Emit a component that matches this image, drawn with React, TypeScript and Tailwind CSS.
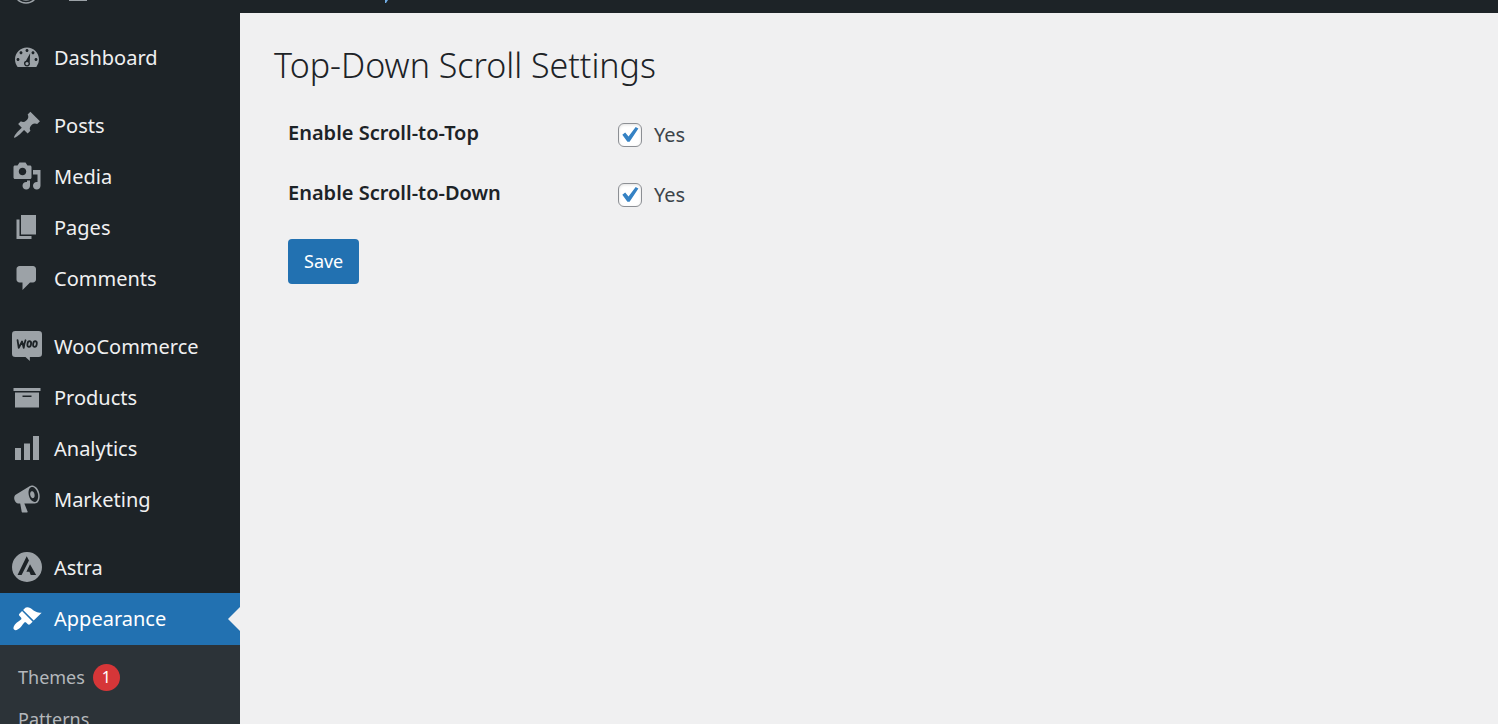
import { useState, type ReactNode } from 'react';

type Item = { label: string; icon: ReactNode; active?: boolean };

function Dashicon({ children }: { children: ReactNode }) {
  return (
    <svg viewBox="0 0 20 20" className="size-[30px] shrink-0" fill="currentColor" aria-hidden="true">
      {children}
    </svg>
  );
}

const icons = {
  dashboard: (
    <Dashicon>
      <path
        fillRule="evenodd"
        d="M3.76 16.700h12.480A7.950 7.950 0 0 0 18 11.700c0-4.420-3.580-8-8-8s-8 3.580-8 8c0 1.890.66 3.630 1.760 5zM10 4.700c.55 0 1 .45 1 1s-.45 1-1 1-1-.45-1-1 .45-1 1-1zM6 6.200c.55 0 1 .45 1 1s-.45 1-1 1-1-.45-1-1 .45-1 1-1zm8 0c.55 0 1 .45 1 1s-.45 1-1 1-1-.45-1-1 .45-1 1-1zM4 10.700c.55 0 1 .45 1 1s-.45 1-1 1-1-.45-1-1 .45-1 1-1zm12 0c.55 0 1 .45 1 1s-.45 1-1 1-1-.45-1-1 .45-1 1-1zM12.100 7.500l-.3 6.100c.1.200.2.500.2.800a2 2 0 1 1-2.700-1.900zM10 13.300a1.100 1.100 0 1 0 0 2.200 1.100 1.100 0 0 0 0-2.200z"
      />
    </Dashicon>
  ),
  posts: (
    <Dashicon>
      <path d="M10.440 3.020l1.820-1.820 6.360 6.350-1.830 1.820c-1.050-.68-2.480-.57-3.410.36l-.75.750c-.92.930-1.040 2.350-.35 3.410l-1.830 1.820-2.410-2.410-2.800 2.790c-.42.420-3.380 2.710-3.800 2.290s1.860-3.390 2.280-3.810l2.790-2.790L4.100 9.360l1.830-1.820c1.050.690 2.480.570 3.400-.36l.75-.75c.93-.92 1.050-2.350.36-3.410z" />
    </Dashicon>
  ),
  media: (
    <Dashicon>
      <path
        fillRule="evenodd"
        d="M13 11V4c0-.55-.45-1-1-1h-1.670L9 1H5L3.670 3H2c-.55 0-1 .45-1 1v7c0 .55.45 1 1 1h10c.55 0 1-.45 1-1zM7 4.500c1.380 0 2.500 1.120 2.500 2.500S8.380 9.500 7 9.500 4.500 8.380 4.500 7 5.620 4.500 7 4.500z"
      />
      <path d="M14 6h5v10.500c0 1.380-1.120 2.500-2.500 2.500S14 17.880 14 16.500s1.120-2.500 2.500-2.500c.17 0 .34.020.500.050V9h-3V6zM10 14.050V13h2v3.500c0 1.380-1.120 2.500-2.500 2.500S7 17.880 7 16.500 8.120 14 9.500 14c.17 0 .34.020.500.050z" />
    </Dashicon>
  ),
  pages: (
    <Dashicon>
      <path d="M6 15V2h10v13H6zm-1 1h8v2H3V5h2v11z" />
    </Dashicon>
  ),
  comments: (
    <Dashicon>
      <path d="M5 2h9c1.100 0 2 .9 2 2v7c0 1.100-.9 2-2 2h-2l-5 5v-5H5c-1.100 0-2-.9-2-2V4c0-1.100.9-2 2-2z" />
    </Dashicon>
  ),
  woo: (
    <Dashicon>
      <path d="M2.200 0h15.600A2.200 2.200 0 0 1 20 2.200v12.900a2.200 2.200 0 0 1-2.200 2.200h-5.900V20L9 17.300H2.200A2.200 2.200 0 0 1 0 15.100V2.200A2.200 2.200 0 0 1 2.200 0z" />
      <g fill="none" stroke="#1d2327" strokeWidth="1.200" strokeLinecap="round" strokeLinejoin="round">
        <path d="M3.700 6.100l.8 5.200L6.700 7l1.100 4.200c.2-1.900.6-3.500 1.200-5" />
        <ellipse cx="11.500" cy="8.700" rx="1.200" ry="1.900" transform="rotate(10 11.500 8.700)" />
        <ellipse cx="15.300" cy="8.700" rx="1.200" ry="1.900" transform="rotate(10 15.300 8.700)" />
      </g>
    </Dashicon>
  ),
  products: (
    <Dashicon>
      <path fillRule="evenodd" d="M19 4v2H1V4h18zM2 7h16v10H2V7zm11 3V9H7v1h6z" />
    </Dashicon>
  ),
  analytics: (
    <Dashicon>
      <path d="M18 18V2h-4v16h4zm-6 0V7H8v11h4zm-6 0v-8H2v8h4z" />
    </Dashicon>
  ),
  marketing: (
    <Dashicon>
      <path
        fillRule="evenodd"
        d="M18.150 5.940c.46 1.620.38 3.220-.02 4.480-.42 1.280-1.260 2.180-2.300 2.480-.16.060-.26.060-.4.060-.06.020-.12.020-.18.020-.06.020-.14.020-.22.020h-6.800l2.220 5.500c.02.140-.06.260-.14.340-.08.100-.24.160-.34.160H6.950c-.1 0-.26-.06-.34-.16-.08-.08-.16-.2-.14-.34l-1-5.500H4.250l-.02-.02c-.5.060-1.080-.18-1.540-.62s-.88-1.080-1.060-1.880c-.24-.8-.2-1.560-.02-2.200.18-.62.580-1.080 1.060-1.300l.02-.02 9-5.400c.1-.06.18-.1.240-.160.06-.04.14-.08.240-.120.160-.08.280-.120.500-.180 1.040-.3 2.240.100 3.220.980s1.840 2.240 2.260 3.860zm-2.580 5.980h-.02c.4-.1.740-.34 1.040-.7.580-.7.860-1.760.860-3.040 0-.64-.1-1.300-.28-1.980-.34-1.360-1.020-2.500-1.780-3.240s-1.680-1.100-2.460-.88c-.82.220-1.400.960-1.700 2-.32 1.040-.28 2.360.060 3.720.38 1.360 1 2.500 1.800 3.240.78.740 1.620 1.100 2.480.88zm-2.540-7.080c.22-.04.420-.02.620.040.38.160.760.480 1.020 1s.420 1.200.420 1.780c0 .3-.04.560-.120.800-.18.480-.44.840-.860.940-.34.100-.8-.060-1.140-.4s-.64-.86-.78-1.500c-.18-.62-.12-1.240.020-1.720s.48-.84.820-.940z"
      />
    </Dashicon>
  ),
  astra: (
    <Dashicon>
      <path
        fillRule="evenodd"
        d="M10 0a10 10 0 1 1 0 20 10 10 0 0 1 0-20zM9.800 2.900L3.700 15.300h2.700l4.900-9.600zM12 8.200l-2.400 5h2l.9 2.100h3.600z"
      />
    </Dashicon>
  ),
  appearance: (
    <Dashicon>
      <path d="M14.480 11.060L7.410 3.990l1.500-1.500c.5-.56 2.300-.47 3.510.320 1.210.800 1.430 1.280 2.910 2.100 1.180.640 2.450 1.260 4.450.850zm-.71.710L6.700 4.700 4.930 6.470c-.39.390-.39 1.020 0 1.410l1.060 1.060c.39.390.39 1.030 0 1.420-.6.600-1.430 1.110-2.210 1.690-.35.260-.7.530-1.010.840C1.430 14.230.4 16.080 1.400 17.070c.99 1 2.840-.030 4.180-1.360.31-.31.580-.66.850-1.020.57-.78 1.080-1.610 1.690-2.210.39-.39 1.020-.39 1.410 0l1.060 1.060c.39.390 1.020.390 1.410 0z" />
    </Dashicon>
  ),
};

const groups: Item[][] = [
  [{ label: 'Dashboard', icon: icons.dashboard }],
  [
    { label: 'Posts', icon: icons.posts },
    { label: 'Media', icon: icons.media },
    { label: 'Pages', icon: icons.pages },
    { label: 'Comments', icon: icons.comments },
  ],
  [
    { label: 'WooCommerce', icon: icons.woo },
    { label: 'Products', icon: icons.products },
    { label: 'Analytics', icon: icons.analytics },
    { label: 'Marketing', icon: icons.marketing },
  ],
  [
    { label: 'Astra', icon: icons.astra },
    { label: 'Appearance', icon: icons.appearance, active: true },
  ],
];

function MenuItem({ label, icon, active }: Item) {
  return (
    <li>
      <a
        href="#"
        aria-current={active ? 'page' : undefined}
        className={
          active
            ? 'relative flex h-[52px] items-center gap-3 bg-[#2271b1] pl-3 text-white'
            : 'flex h-[51px] items-center gap-3 pl-3 text-[#9ca2a7]'
        }
      >
        <span className={active ? '' : 'pb-0.5'}>{icon}</span>
        <span className={active ? 'text-white' : 'text-[#f0f0f1]'}>{label}</span>
        {active && (
          <span className="absolute top-1/2 right-0 -translate-y-1/2 border-y-12 border-r-12 border-y-transparent border-r-[#f0f0f1]" />
        )}
      </a>
    </li>
  );
}

function CheckRow({ id, label }: { id: string; label: string }) {
  const [checked, setChecked] = useState(true);
  return (
    <div className="flex h-[60px] items-start">
      <label htmlFor={id} className="w-[330px] leading-7 font-semibold text-[#1d2327]">
        {label}
      </label>
      <span className="flex items-center gap-3 pt-0.5">
        <span className="relative flex size-6">
          <input
            id={id}
            type="checkbox"
            checked={checked}
            onChange={(e) => setChecked(e.target.checked)}
            className="size-6 appearance-none rounded-md border border-[#8c8f94] bg-white shadow-[inset_0_1px_3px_rgba(0,0,0,0.12)]"
          />
          {checked && (
            <svg viewBox="0 0 24 24" className="pointer-events-none absolute inset-0 size-6" aria-hidden="true">
              <path d="M4.300 11.700l2.900-2.100 3.300 3.800 7.200-9.400 2.700 1.400-8.800 13.300H9.400z" fill="#3582c4" />
            </svg>
          )}
        </span>
        <label htmlFor={id} className="leading-7 text-[#3c434a]">
          Yes
        </label>
      </span>
    </div>
  );
}

export default function App() {
  return (
    <div className="flex h-screen flex-col overflow-hidden bg-[#f0f0f1] font-['Noto_Sans','Open_Sans',sans-serif] text-[20px]">
      <header className="h-[13px] shrink-0 bg-[#1d2327]">
        <svg className="h-[13px] w-[400px]" viewBox="0 0 400 13" aria-hidden="true">
          <circle cx="26" cy="-9" r="12" fill="none" stroke="#9ca2a7" strokeWidth="1.500" />
          <circle cx="26" cy="-9" r="9.800" fill="#9ca2a7" />
          <path d="M69 0h18v1H69z" fill="#9ca2a7" />
          <path d="M385 0h3l-2 3h-1z" fill="#72aee6" />
        </svg>
      </header>
      <div className="flex min-h-0 flex-1">
        <nav aria-label="Main menu" className="w-60 shrink-0 overflow-hidden bg-[#1d2327] pt-[19px]">
          <div className="flex flex-col gap-[17px]">
            {groups.map((group) => (
              <ul key={group[0].label}>
                {group.map((item) => (
                  <MenuItem key={item.label} {...item} />
                ))}
              </ul>
            ))}
          </div>
          <ul className="bg-[#2c3338] py-[11px] text-[18px] text-[#b4b8bc]">
            <li>
              <a href="#" className="flex h-[42px] items-center gap-2 pl-[18px]">
                Themes
                <span className="flex size-[27px] items-center justify-center rounded-full bg-[#d63638] text-base text-white">
                  1
                </span>
              </a>
            </li>
            <li>
              <a href="#" className="flex h-[42px] items-center pl-[18px]">
                Patterns
              </a>
            </li>
          </ul>
        </nav>
        <main className="flex-1 px-[34px] pt-7">
          <h1 className="text-[34px] leading-[48px] font-light text-[#1d2327]">Top-Down Scroll Settings</h1>
          <form className="px-3.5 pt-[30px]" onSubmit={(e) => e.preventDefault()}>
            <CheckRow id="scroll-top" label="Enable Scroll-to-Top" />
            <CheckRow id="scroll-down" label="Enable Scroll-to-Down" />
            <button type="submit" className="h-[45px] rounded-sm bg-[#2271b1] px-4 text-[18px] text-white">
              Save
            </button>
          </form>
        </main>
      </div>
    </div>
  );
}
